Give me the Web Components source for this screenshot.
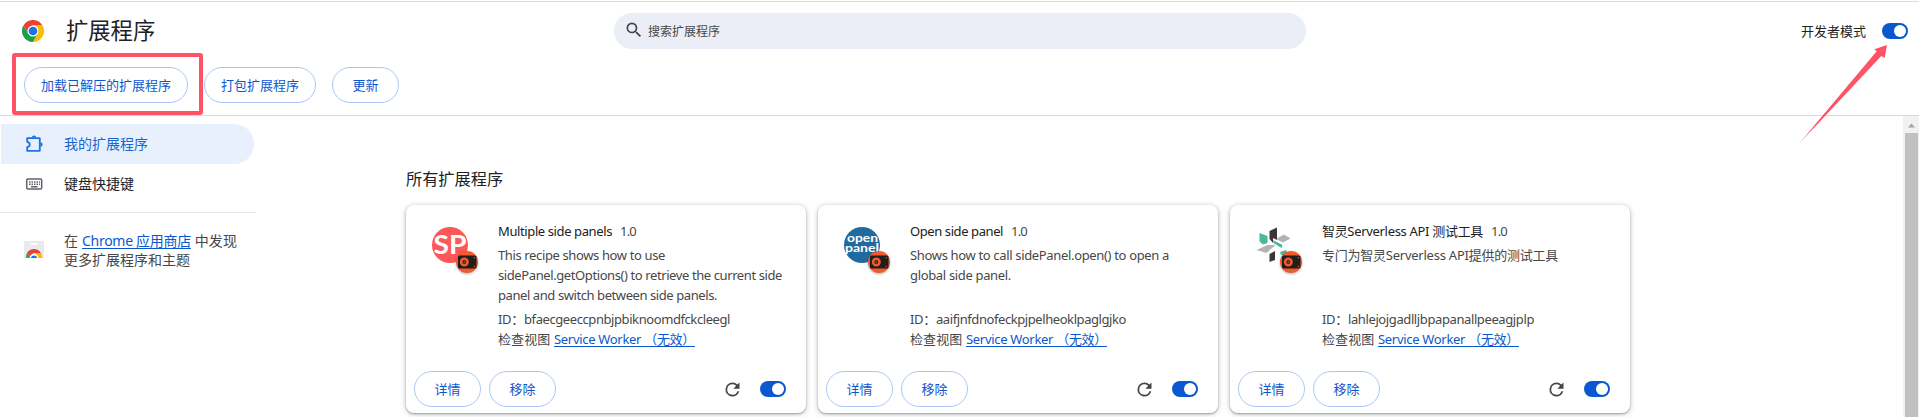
<!DOCTYPE html>
<html lang="zh-CN">
<head>
<meta charset="utf-8">
<title>扩展程序</title>
<style>
html,body{margin:0;height:417px;overflow:hidden;background:#fff}
body{font-family:"Noto Sans","Noto Sans CJK SC",sans-serif;color:#202124;text-spacing-trim:space-all}
</style>
</head>
<body>
<extensions-manager></extensions-manager>
<script>
const define=(name,html,setup)=>customElements.define(name,class extends HTMLElement{
  connectedCallback(){
    if(this.shadowRoot)return;
    const root=this.attachShadow({mode:'open'});
    const t=document.createElement('template');
    t.innerHTML=html;
    root.append(t.content.cloneNode(true));
    if(setup)setup(this,root);
  }
});

/* A line of text whose tracking is adjusted so that it spans a set width. */
define('text-run',`<style>:host{display:inline;white-space:pre}</style><slot></slot>`,host=>{
  const w=parseFloat(host.getAttribute('width'));
  if(!w)return;
  const natural=host.getBoundingClientRect().width;
  const n=[...host.textContent].length;
  host.style.letterSpacing=((w-natural)/n).toFixed(4)+'px';
});

define('pill-button',`<style>
:host{display:inline-flex;box-sizing:border-box;height:36px;min-width:67px;padding:0 16px;border:1px solid #a8c7fa;border-radius:18px;align-items:center;justify-content:center;color:#0b57d0;font-size:13px;line-height:20px;white-space:nowrap}
</style><slot></slot>`);

define('toggle-switch',`<style>
:host{display:flex;box-sizing:border-box;flex:none;width:26px;height:16px;border-radius:8px;background:#0b57d0;padding:2px;justify-content:flex-end}
i{width:12px;height:12px;border-radius:50%;background:#fff}
</style><i></i>`);

define('search-field',`<style>
:host{display:flex;box-sizing:border-box;width:692px;height:36px;border-radius:18px;background:#ebeef7;align-items:center;padding-left:10px;font-size:12px;color:#474747}
svg{width:20px;height:20px;margin-right:4px;margin-top:-1px;fill:#444746}
</style><svg viewBox="0 0 24 24"><path d="M15.5 14h-.79l-.28-.27A6.47 6.47 0 0 0 16 9.5 6.5 6.5 0 1 0 9.5 16c1.61 0 3.09-.59 4.23-1.57l.27.28v.79l5 4.99L20.49 19l-4.99-5zm-6 0C7.01 14 5 11.99 5 9.5S7.01 5 9.5 5 14 7.01 14 9.5 11.99 14 9.5 14z"/></svg><slot></slot>`);

define('chrome-logo',`<style>:host{display:block;width:22px;height:22px}svg{display:block}</style>
<svg width="22" height="22" viewBox="0 0 48 48"><path fill="#ea4335" d="M3.2 12A24 24 0 0 1 44.8 12H24L13.6 30z"/><path fill="#1e9e48" d="M3.2 12A24 24 0 0 0 24 48L34.4 30H13.6z"/><path fill="#fbbc04" d="M24 12L34.4 30 24 48A24 24 0 0 0 44.8 12z"/><circle cx="24" cy="24" r="12" fill="#fff"/><circle cx="24" cy="24" r="9.5" fill="#1a73e8"/></svg>`);

define('top-bar',`<style>
:host{display:flex;flex-direction:column;box-sizing:border-box;height:115px;border-top:1px solid #dadce0;border-bottom:1px solid #d7d9dc;margin-top:1px}
.row{display:grid;grid-template-columns:614px 692px 1fr;height:57px;align-items:center}
.brand{display:flex;align-items:center;padding-left:22px;gap:22px}
h1{margin:0;font-size:22.3px;line-height:30px;font-weight:400}
.dev{display:flex;justify-content:flex-end;align-items:center;gap:16px;padding-right:11px;font-size:13px}
.dev span{margin-top:-1px}
.actions{display:flex;gap:16px;padding:8px 24px 0}
</style>
<div class="row"><div class="brand"><chrome-logo></chrome-logo><h1>扩展程序</h1></div>
<search-field>搜索扩展程序</search-field>
<div class="dev"><span>开发者模式</span><toggle-switch></toggle-switch></div></div>
<div class="actions"><pill-button>加载已解压的扩展程序</pill-button><pill-button>打包扩展程序</pill-button><pill-button>更新</pill-button></div>`);

define('nav-item',`<style>
:host{display:flex;box-sizing:border-box;width:253px;height:40px;margin-left:1px;border-radius:0 20px 20px 0;align-items:center;padding-left:23px;gap:20px;font-size:14px;font-weight:400}
:host([selected]){background:#e8f0fe;color:#1967d2}
span{padding-bottom:2px}
::slotted(svg){width:20px;height:20px;flex:none}
</style><slot name="icon"></slot><span><slot></slot></span>`);

define('side-nav',`<style>
:host{display:flex;flex-direction:column;box-sizing:border-box;width:256px;padding-top:8px}
hr{width:256px;height:1px;border:0;margin:8px 0 0;background:#e6e7e9}
.store{display:flex;padding:18px 0 0 24px;gap:20px;font-size:14px;line-height:19px;color:#474747}
.store svg{margin-top:10px;flex:none}
a{color:#0b57d0;text-decoration:underline;text-underline-offset:2px}
</style>
<nav-item selected><svg slot="icon" viewBox="0 0 20 20" fill="none"><path d="M3.200 4.200H15.800V16.800H3.200V13.200Q5.800 12.500 5.800 10.500T3.200 7.800Z" stroke="#1a73e8" stroke-width="1.800" stroke-linejoin="round"/><path d="M7.800 3.600a2.200 2.200 0 0 1 4.400 0zM16.400 8.300a2.200 2.200 0 0 1 0 4.400z" fill="#1a73e8"/></svg>我的扩展程序</nav-item>
<nav-item><svg slot="icon" viewBox="0 0 20 20"><rect x="2.700" y="5" width="15" height="10" rx="1.200" fill="none" stroke="#5f6368" stroke-width="1.500"/><path d="M5 8h1.500M7.500 8H9M10 8h1.500M12.500 8H14M15 8h1M5 10.200h1.500M7.500 10.200H9M10 10.200h1.500M12.500 10.200H14M15 10.200h1M7 12.700h6.500" stroke="#5f6368" stroke-width="1.400"/></svg>键盘快捷键</nav-item>
<hr>
<div class="store"><svg width="20" height="17" viewBox="0 0 20 17"><path fill="#e8eaed" d="M0 0h20v17H0z"/><rect x="7" y="2" width="6" height="2" rx="1" fill="#fff"/><path fill="#34a853" d="M2 17A8.500 8.500 0 0 1 3.200 11.800L8 17z"/><path fill="#ea4335" d="M3 11.900A8.300 8.300 0 0 1 17 11.900H10L6 15z"/><path fill="#fbbc04" d="M17 11.900A8.500 8.500 0 0 1 18.300 17H12L11 11.900z"/><path fill="#fff" d="M5.700 17a4.300 4.300 0 0 1 8.600 0z"/><path fill="#1a73e8" d="M6.800 17a3.300 3.300 0 0 1 6.400 0z"/></svg>
<div><div><text-run width="18">在 </text-run><a><text-run width="109">Chrome 应用商店</text-run></a><text-run width="46"> 中发现</text-run></div><div>更多扩展程序和主题</div></div></div>`);

define('extension-icon',`<style>
:host{display:grid;width:36px;height:36px;position:relative}
.badge{position:absolute;left:22px;top:22px;filter:drop-shadow(0 1px 1px rgba(0,0,0,.3));overflow:visible}
</style><slot></slot>
<svg class="badge" width="26" height="26" viewBox="0 0 26 26"><circle cx="13" cy="13" r="11" fill="#f4592b"/><rect x="4" y="6.500" width="18.500" height="13" rx="1.500" fill="#1f1f1f"/><circle cx="10.300" cy="13" r="3.200" fill="none" stroke="#f4592b" stroke-width="2.600"/><circle cx="10.300" cy="13" r=".8" fill="#f4592b"/><circle cx="20.300" cy="8.700" r=".7" fill="#f4592b"/><circle cx="20.300" cy="17.500" r=".7" fill="#f4592b"/></svg>`);

define('extension-card',`<style>
:host{display:flex;flex-direction:column;box-sizing:border-box;width:400px;height:208px;border-radius:8px;background:#fff;box-shadow:0 1px 2px rgba(60,64,67,.4),0 1px 5px 1px rgba(60,64,67,.22);font-size:13px;line-height:20px;color:#474747}
.main{display:grid;grid-template-columns:66px 1fr;padding:16px 0 0 26px;height:150px;box-sizing:border-box}
.icon{padding-top:6px}
.title{display:flex;gap:8px;color:#202124;height:24px}
.ver{color:#474747}
.desc{height:64px}
.row{display:flex;height:20px;white-space:pre}
a{color:#0b57d0;text-decoration:underline;text-underline-offset:2px}
.foot{display:flex;align-items:center;padding:16px 20px 0 8px;gap:8px}
.foot svg{margin-left:auto;margin-right:9px;width:21px;height:21px;fill:#444746}
</style>
<div class="main"><div class="icon"><slot name="icon"></slot></div><div><div class="title"><slot name="title"></slot><text-run class="ver" width="16">1.0</text-run></div><div class="desc"><slot name="desc"></slot></div>
<div class="row"><slot name="id"></slot></div><div class="row"><text-run width="56">检查视图 </text-run><a><text-run width="141">Service Worker （无效）</text-run></a></div></div></div>
<div class="foot"><pill-button>详情</pill-button><pill-button>移除</pill-button><svg viewBox="0 0 24 24"><path d="M17.65 6.35A7.96 7.96 0 0 0 12 4a8 8 0 1 0 7.730 10h-2.080A6 6 0 1 1 12 6c1.660 0 3.140.69 4.220 1.780L13 11h7V4l-2.350 2.350z"/></svg><toggle-switch></toggle-switch></div>`);

define('scroll-bar',`<style>
:host{display:flex;flex-direction:column;align-items:center;width:16px;background:#f1f1f1}
svg{flex:none}i{width:13px;flex:1;background:#c1c1c1}
</style><svg width="16" height="17"><path d="M5 11.500L8.500 7.500 12 11.500z" fill="#a3a3a3"/></svg><i></i>`);

define('callout-marks',`<style>
:host{position:absolute;inset:0;pointer-events:none}
.box{position:absolute;left:12px;top:53px;width:183px;height:54px;border:4px solid #ff5365;border-radius:3px}
svg{position:absolute;left:1790px;top:40px}
</style><div class="box"></div><svg width="110" height="110" viewBox="1790 40 110 110"><defs><linearGradient id="g" gradientUnits="userSpaceOnUse" x1="1797" y1="146" x2="1815" y2="126"><stop offset="0" stop-color="#ff5365" stop-opacity=".3"/><stop offset="1" stop-color="#ff5365"/></linearGradient></defs><path fill="url(#g)" d="M1887 45L1874.300 49.200 1876.700 51.300 1797 146 1881.300 56 1884.700 58z"/></svg>`);

define('extensions-manager',`<style>
:host{display:flex;flex-direction:column;position:relative;width:1919px;height:417px;overflow:hidden}
.body{display:grid;grid-template-columns:256px 1fr 16px;flex:1;min-height:0}
main{padding:50px 0 0 150px}
h2{margin:0;font-size:16.200px;line-height:27px;height:39px;font-weight:400}
.cards{display:flex;gap:12px}
</style>
<top-bar></top-bar>
<div class="body"><side-nav></side-nav><main><h2>所有扩展程序</h2><div class="cards">
<extension-card><extension-icon slot="icon"><svg width="36" height="36"><circle cx="18" cy="18" r="18" fill="#ff5757"/><text x="1.500" y="27" textLength="33" lengthAdjust="spacingAndGlyphs" font-family="Lato" font-weight="700" font-size="26" fill="#fff">SP</text></svg></extension-icon>
<text-run slot="title" width="114">Multiple side panels</text-run>
<div slot="desc"><div><text-run width="167">This recipe shows how to use</text-run></div><div><text-run width="284">sidePanel.getOptions() to retrieve the current side</text-run></div><div><text-run width="219">panel and switch between side panels.</text-run></div></div>
<span slot="id"><text-run width="26">ID：</text-run><text-run width="206">bfaecgeeccpnbjpbiknoomdfckcleegl</text-run></span></extension-card>
<extension-card><extension-icon slot="icon"><svg width="36" height="36"><circle cx="18" cy="18" r="18" fill="#216a9f"/><text x="3" y="14.500" textLength="31" lengthAdjust="spacingAndGlyphs" font-family="Lato" font-weight="700" font-size="11.500" fill="#fff">open</text><text x="1" y="25" textLength="34" lengthAdjust="spacingAndGlyphs" font-family="Lato" font-weight="700" font-size="11.500" fill="#fff">panel</text></svg></extension-icon>
<text-run slot="title" width="93">Open side panel</text-run>
<div slot="desc"><div><text-run width="259">Shows how to call sidePanel.open() to open a</text-run></div><div><text-run width="101">global side panel.</text-run></div></div>
<span slot="id"><text-run width="26">ID：</text-run><text-run width="190">aaifjnfdnofeckpjpelheoklpaglgjko</text-run></span></extension-card>
<extension-card><extension-icon slot="icon"><svg width="36" height="36"><path fill="#3b3736" d="M13.500 4L21 .5V13L17 11v5l-3.500-4zM13.500 27l5.500-3v9L13.500 35z"/><path fill="#48b9a0" d="M3.500 6l8 3v7l-4.500 1.500-3.500-3zM17 13l9.500 5-1 3-8-5zM24 25l6-2 2 5h-7z"/><path fill="#b3b3b3" d="M20 12l8-4.500 6.500 4-7.500 4zM.5 23l11-5h8l-9 8z"/></svg></extension-icon>
<text-run slot="title" width="161">智灵Serverless API 测试工具</text-run>
<div slot="desc"><text-run width="236">专门为智灵Serverless API提供的测试工具</text-run></div>
<span slot="id"><text-run width="26">ID：</text-run><text-run width="186">lahlejojgadlljbpapanallpeeagjplp</text-run></span></extension-card>
</div></main><scroll-bar></scroll-bar></div>
<callout-marks></callout-marks>`);
</script>
</body>
</html>
